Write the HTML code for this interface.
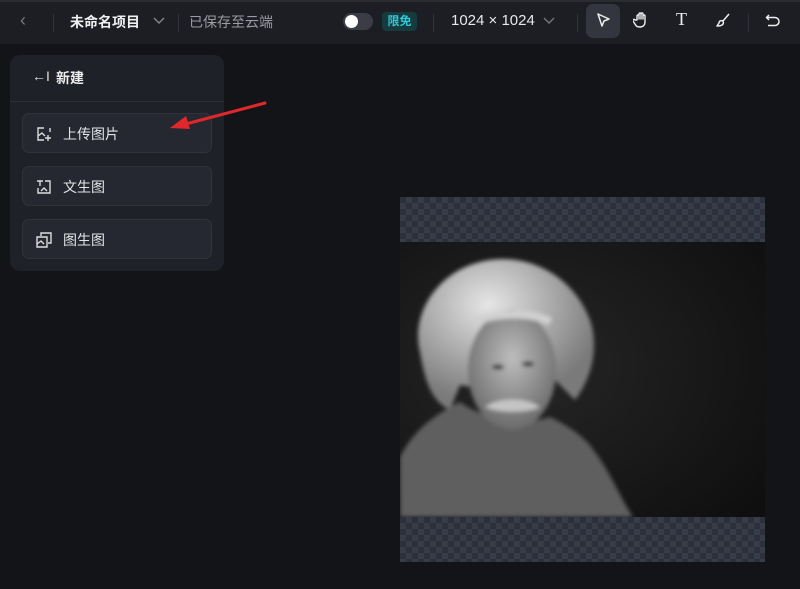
<!DOCTYPE html>
<html><head><meta charset="utf-8"><style>
*{margin:0;padding:0;box-sizing:border-box}
body{width:800px;height:589px;background:#121418;font-family:"Liberation Sans","Noto Sans CJK SC",sans-serif;position:relative;overflow:hidden;color:#e8e9ec}
.top{position:absolute;left:0;top:0;width:800px;height:44px;background:#1c1e24;border-top:2px solid #2a2c32}
.a{position:absolute;white-space:nowrap}
.sep{position:absolute;top:12px;width:1px;height:18px;background:#30333a}
.panel{position:absolute;left:10px;top:55px;width:214px;height:216px;background:#1e2128;border-radius:10px}
.btn{position:absolute;left:12px;width:190px;height:40px;background:#252831;border:1px solid #30333b;border-radius:7px;font-size:14px;color:#e3e4e8}
.btn span{position:absolute;left:40px;top:10px}
.btn svg{position:absolute;left:13px;top:12px}
.chk{position:absolute;left:400px;width:365px;height:45px;background-color:#2b303b;background-image:linear-gradient(45deg,#363c48 25%,transparent 25%,transparent 75%,#363c48 75%),linear-gradient(45deg,#363c48 25%,transparent 25%,transparent 75%,#363c48 75%);background-size:12px 12px;background-position:0 0,6px 6px}
</style></head><body>
<div class="top">
 <div class="a" style="left:20px;top:8px;font-size:18px;color:#777">‹</div>
 <div class="sep" style="left:53px"></div>
 <div class="a" style="left:70px;top:10px;font-size:14px;font-weight:bold;color:#f0f0f2">未命名项目</div>
 <svg class="a" style="left:153px;top:15px" width="12" height="8"><path d="M1 1l5 5 5-5" stroke="#888" fill="none" stroke-width="1.4"/></svg>
 <div class="sep" style="left:178px"></div>
 <div class="a" style="left:189px;top:10px;font-size:14px;color:#9a9ca2">已保存至云端</div>
 <div class="a" style="left:343px;top:11px;width:30px;height:17px;border-radius:9px;background:#3a3d44"><div style="position:absolute;left:2px;top:2px;width:13px;height:13px;border-radius:50%;background:#fff"></div></div>
 <div class="a" style="left:382px;top:10px;width:35px;height:19px;border-radius:4px;background:#173a3f;color:#2fc8d8;font-size:12px;font-weight:bold;text-align:center;line-height:19px">限免</div>
 <div class="sep" style="left:433px"></div>
 <div class="a" style="left:451px;top:10px;font-size:15px;color:#e8e8ea">1024 × 1024</div>
 <svg class="a" style="left:543px;top:15px" width="12" height="8"><path d="M1 1l5 5 5-5" stroke="#777" fill="none" stroke-width="1.4"/></svg>
 <div class="sep" style="left:577px"></div>
 <div class="a" style="left:586px;top:2px;width:34px;height:34px;border-radius:7px;background:#33363e"></div>
 <svg class="a" style="left:595px;top:10px" width="16" height="16"><path d="M3 2l11 5-5 2-2 5z" stroke="#eee" fill="none" stroke-width="1.5" stroke-linejoin="round"/></svg>
 <svg class="a" style="left:633px;top:9px" width="16" height="18"><path d="M4 9V5a1 1 0 012 0v3V3a1 1 0 012 0v5V3a1 1 0 012 0v5V5a1 1 0 012 0v6c0 3-2 5-5 5s-4-1-5-3l-2-3a1 1 0 012-1z" stroke="#eee" fill="none" stroke-width="1.4" stroke-linejoin="round"/></svg>
 <div class="a" style="left:676px;top:7px;font-size:18px;font-family:'Liberation Serif',serif;color:#eee">T</div>
 <svg class="a" style="left:715px;top:10px" width="16" height="16"><path d="M14 2l-6 7M8 9c-2-1-4 0-4 2l-2 3c2 0 5 0 6-2 1-1 0-2 0-3z" stroke="#eee" fill="none" stroke-width="1.5" stroke-linejoin="round"/></svg>
 <div class="sep" style="left:748px"></div>
 <svg class="a" style="left:765px;top:10px" width="16" height="16"><path d="M4 3L1.5 5.5 4 8M2 5.5h8a4 4 0 010 8H3" stroke="#eee" fill="none" stroke-width="1.5"/></svg>
</div>
<div class="panel">
 <div class="a" style="left:22px;top:13px;font-size:14px;color:#ddd">←I</div>
 <div class="a" style="left:46px;top:13px;font-size:14px;font-weight:bold;color:#eee">新建</div>
 <div class="a" style="left:0;top:46px;width:214px;height:1px;background:#2c2f37"></div>
 <div class="btn" style="top:58px"><svg width="16" height="16"><path d="M8 2H2v12h6M2 10l4-3 3 3M12 9v6M9 12h6M14 2v4" stroke="#ddd" fill="none" stroke-width="1.4"/></svg><span>上传图片</span></div>
 <div class="btn" style="top:111px"><svg width="16" height="16"><path d="M1 2h6M4 2v5M9 2h5v12H2v-5M5 12l3-3 3 3" stroke="#ddd" fill="none" stroke-width="1.4"/></svg><span>文生图</span></div>
 <div class="btn" style="top:164px"><svg width="16" height="16"><path d="M5 4V1h10v10h-3M1 5h10v10H1zM1 12l4-3 3 3" stroke="#ddd" fill="none" stroke-width="1.4"/></svg><span>图生图</span></div>
</div>
<svg class="a" style="left:160px;top:95px" width="110" height="40"><line x1="105" y1="8" x2="22" y2="30" stroke="#e0282c" stroke-width="3" stroke-linecap="round"/><path d="M10 33l16-12 4 13z" fill="#e0282c"/></svg>
<div class="chk" style="top:197px"></div>
<div class="chk" style="top:517px"></div>
<svg class="a" style="left:400px;top:242px" width="365" height="275">
 <defs>
  <radialGradient id="bg" cx="0.35" cy="0.45" r="0.8"><stop offset="0" stop-color="#262626"/><stop offset="1" stop-color="#0f0f0f"/></radialGradient>
  <radialGradient id="hair" cx="0.4" cy="0.3" r="0.65"><stop offset="0" stop-color="#e6e6e6"/><stop offset="1" stop-color="#7a7a7a"/></radialGradient>
  <radialGradient id="face" cx="0.5" cy="0.4" r="0.6"><stop offset="0" stop-color="#bdbdbd"/><stop offset="1" stop-color="#6a6a6a"/></radialGradient>
  <filter id="bl"><feGaussianBlur stdDeviation="2"/></filter>
 </defs>
 <rect width="365" height="275" fill="url(#bg)"/>
 <g filter="url(#bl)">
 <path d="M20 110c-10-40 20-85 70-92 45-6 85 20 100 60 10 30 0 60-15 80l-20-20c-20 10-70 10-95 5l-10 25c-20-10-25-30-30-58z" fill="url(#hair)"/>
 <path d="M0 275V215c15-30 40-45 60-55 20 15 60 25 90 15 20 10 35 20 45 35 15 20 25 45 38 65z" fill="#5e5e5e"/>
 <ellipse cx="112" cy="128" rx="44" ry="60" fill="url(#face)"/>
 <path d="M85 165c15-10 40-10 55 0-12 6-42 6-55 0z" fill="#c5c5c5"/>
 <ellipse cx="98" cy="125" rx="6" ry="2.5" fill="#333"/><ellipse cx="128" cy="122" rx="6" ry="2.5" fill="#333"/>
 <path d="M75 80c20-10 60-10 75 0" stroke="#d0d0d0" stroke-width="8" fill="none"/>
 </g>
</svg>
</body></html>
